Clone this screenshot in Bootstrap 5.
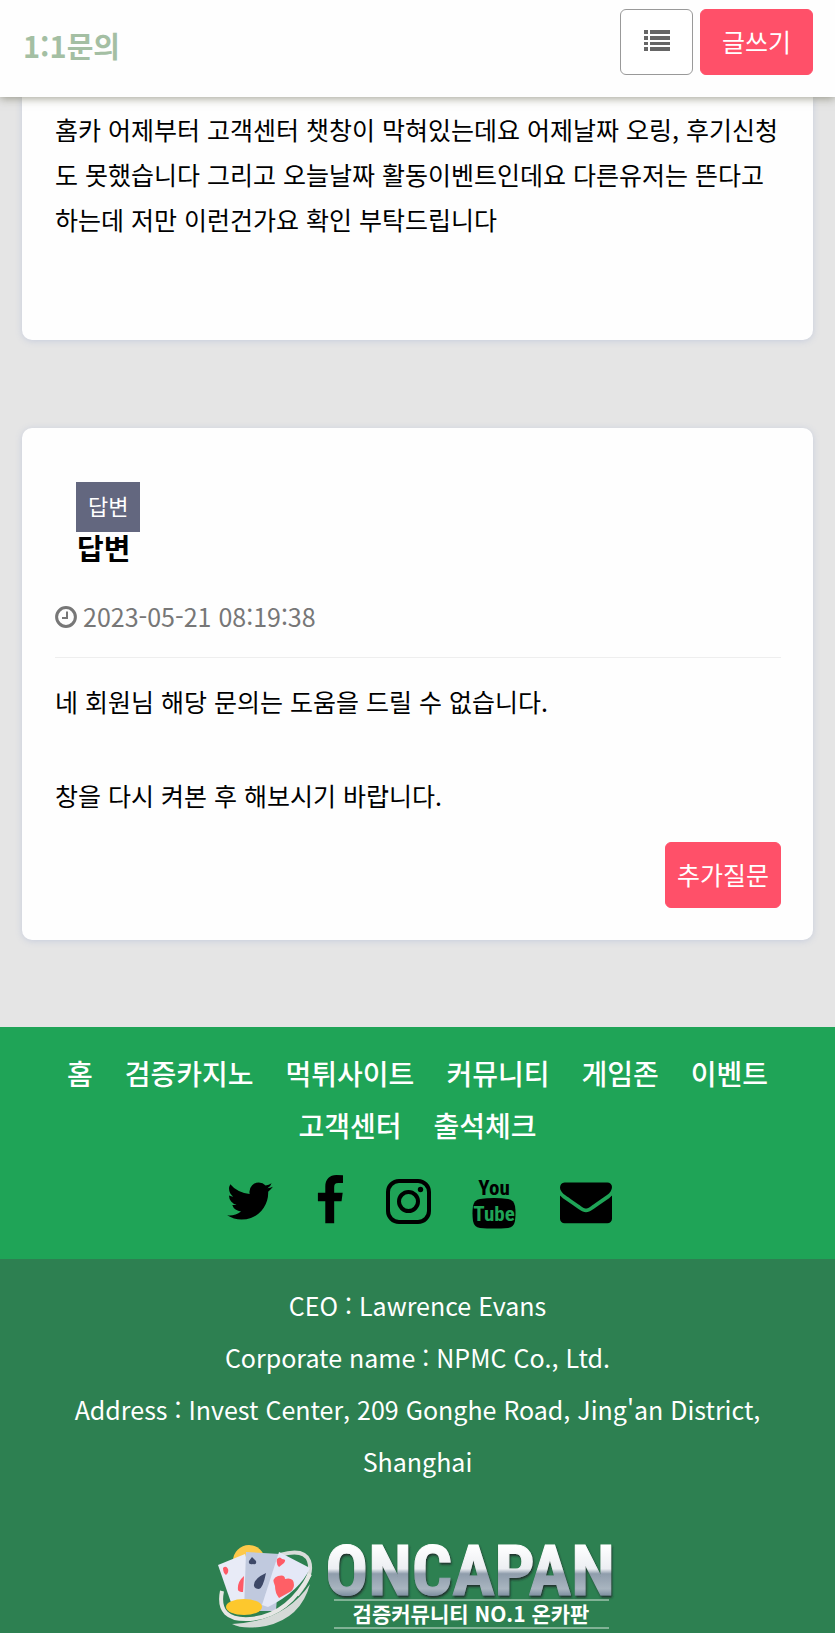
<!DOCTYPE html>
<html lang="ko">
<head>
<meta charset="utf-8">
<meta name="viewport" content="width=device-width, initial-scale=1">
<title>1:1문의</title>
<link href="https://cdn.jsdelivr.net/npm/bootstrap@5.3.0/dist/css/bootstrap.min.css" rel="stylesheet">
<style>
body{background:#e5e5e5;color:#000;font-family:"Noto Sans CJK KR","Noto Sans",sans-serif;font-size:25px;line-height:45px}
.topbar{height:97px;padding:9px 22px 0 23px;background:#fefefe;box-shadow:0 1px 9px rgba(60,60,30,.5);z-index:10}
.topbar h1{font-size:29px;line-height:72px;color:#a4bfa3}
.topbar-actions{gap:7px}
.action{height:66px;border-radius:6px;font-size:25px;line-height:44px;padding:0 11px 2px}
.action-pink,.action-pink:hover{background:#ff5069;color:#fff;border-color:#ff5069}
.action-write{min-width:113px}
.action-list{width:73px;border:1px solid #999;color:#666;background:#fff}
.panel{margin:0 22px;padding:0 32px 0 33px;background:#fefefe;border-radius:10px;box-shadow:0 1px 7px #c6ccdc}
.panel-first{height:243px;padding-top:10px;border-radius:0 0 10px 10px;word-break:break-all}
.panel-reply{margin-top:88px;margin-bottom:87px;padding-top:54px;padding-bottom:32px}
.reply-head{padding-left:21px}
.reply-tag{height:50px;padding:0 12px;background:#63677f;color:#fff;font-size:22px;line-height:46px}
.reply-head h2{font-size:29px;line-height:30px;padding-left:1px}
.reply-date{color:#777;column-gap:6px;margin-top:32px;padding-bottom:18px;border-bottom:1px solid #eee}
.reply-text{line-height:47px;padding-top:20px}
.reply-actions{margin-top:23px}
.foot-nav{background:#1fa457;padding:20px 22px 30px}
.foot-nav ul{column-gap:32px;font-size:28px;font-weight:500;line-height:52px}
.foot-nav a{color:#fff;text-decoration:none}
.foot-nav .social{column-gap:28px;margin-top:22px}
.foot-nav .social a{color:#000}
.social-mail{padding-left:12px}
.foot-info{background:#2d8051;color:#fff;padding:20px 60px 0;line-height:52px}
.brand-logo{margin-top:52px;overflow:visible}
.logo-word{font-family:"Liberation Sans Narrow","Roboto Condensed","Liberation Sans",sans-serif;font-weight:700;font-size:71px}
.logo-sub{font-family:"Noto Sans CJK KR",sans-serif;font-weight:700;font-size:21px}
.tube{font-family:"Liberation Sans Narrow","Roboto Condensed","Liberation Sans",sans-serif;font-weight:700;font-size:21px}
</style>
</head>
<body>
<header class="topbar d-flex justify-content-between align-items-start position-sticky top-0">
  <h1 class="fw-bold m-0">1:1문의</h1>
  <div class="topbar-actions d-flex">
    <button type="button" class="btn action action-list d-flex align-items-center justify-content-center" aria-label="목록">
      <svg width="28" height="24" viewBox="0 0 28 24" fill="currentColor" aria-hidden="true"><path d="M1 1h4v4H1zM7 1h20v4H7zM1 7h4v4H1zM7 7h20v4H7zM1 13h4v3H1zM7 13h20v3H7zM1 18h4v4H1zM7 18h20v4H7z"/></svg>
    </button>
    <button type="button" class="btn action action-pink action-write">글쓰기</button>
  </div>
</header>
<main>
  <article class="panel panel-first">
    <p class="m-0">홈카 어제부터 고객센터 챗창이 막혀있는데요 어제날짜 오링, 후기신청도 못했습니다 그리고 오늘날짜 활동이벤트인데요 다른유저는 뜬다고 하는데 저만 이런건가요 확인 부탁드립니다</p>
  </article>
  <article class="panel panel-reply">
    <div class="reply-head d-flex flex-column align-items-start">
      <span class="reply-tag">답변</span>
      <h2 class="fw-bold m-0">답변</h2>
    </div>
    <div class="reply-date d-flex align-items-center">
      <svg width="22" height="22" viewBox="0 0 22 22" fill="none" stroke="currentColor" aria-hidden="true"><circle cx="11" cy="11" r="9.4" stroke-width="3"/><path d="M12 5.500v6.500H7" stroke-width="2"/></svg>
      <time datetime="2023-05-21T08:19:38">2023-05-21 08:19:38</time>
    </div>
    <div class="reply-text">네 회원님 해당 문의는 도움을 드릴 수 없습니다.<br><br>창을 다시 켜본 후 해보시기 바랍니다.</div>
    <div class="reply-actions text-end"><button type="button" class="btn action action-pink">추가질문</button></div>
  </article>
</main>
<footer>
  <nav class="foot-nav" aria-label="하단 메뉴">
    <ul class="list-unstyled d-flex flex-wrap justify-content-center m-0">
      <li><a href="#">홈</a></li><li><a href="#">검증카지노</a></li><li><a href="#">먹튀사이트</a></li><li><a href="#">커뮤니티</a></li><li><a href="#">게임존</a></li><li><a href="#">이벤트</a></li><li><a href="#">고객센터</a></li><li><a href="#">출석체크</a></li>
    </ul>
    <div class="social d-flex justify-content-center align-items-center">
      <a href="#" class="d-flex" aria-label="Twitter"><svg width="52" height="52" viewBox="0 0 1792 1792" fill="currentColor"><path d="M1684 408q-67 98-162 167 1 14 1 42 0 130-38 259.500t-115.500 248.500-184.500 210.500-258 146-323 54.500q-271 0-496-145 35 4 78 4 225 0 401-138-105-2-188-64.500t-114-159.500q33 5 61 5 43 0 85-11-112-23-185.500-111.500t-73.500-205.500v-4q68 38 146 41-66-44-105-115t-39-154q0-88 44-163 121 149 294.500 238.500t371.500 99.500q-8-38-8-74 0-134 94.500-228.500t228.500-94.500q140 0 236 102 109-21 205-78-37 115-142 178 93-10 186-50z"/></svg></a>
      <a href="#" class="d-flex" aria-label="Facebook"><svg width="52" height="52" viewBox="0 0 1792 1792" fill="currentColor"><path d="M1343 12v264h-157q-86 0-116 36t-30 108v189h293l-39 296h-254v759h-306v-759h-255v-296h255v-218q0-186 104-288.500t277-102.500q147 0 228 12z"/></svg></a>
      <a href="#" class="d-flex" aria-label="Instagram"><svg width="52" height="52" viewBox="0 0 52 52" fill="none" stroke="currentColor" stroke-width="4"><rect x="4" y="6" width="41" height="41" rx="11"/><circle cx="24.500" cy="26.500" r="9.500"/><circle cx="36.500" cy="14.500" r="2.700" fill="currentColor" stroke="none"/></svg></a>
      <a href="#" class="d-flex ps-1" aria-label="YouTube"><svg width="52" height="56" viewBox="0 0 52 56" fill="currentColor"><text class="tube" x="26" y="22" text-anchor="middle">You</text><path d="M12 26Q26 24 40 26Q46 27 47 33Q48 40 47 48Q46 54 40 55Q26 56 12 55Q6 54 5 48Q4 40 5 33Q6 27 12 26Z"/><text class="tube" x="26" y="48" text-anchor="middle" fill="#1fa457">Tube</text></svg></a>
      <a href="#" class="social-mail d-flex" aria-label="E-mail"><svg width="52" height="52" viewBox="0 0 1792 1792" fill="currentColor"><path d="M1792 710v794q0 66-47 113t-113 47h-1472q-66 0-113-47t-47-113v-794q44 49 101 87 362 246 497 345 57 42 92.500 65.500t94.500 48 110 24.500h2q51 0 110-24.500t94.500-48 92.500-65.500q170-123 498-345 57-39 100-87zm0-294q0 79-49 151t-122 123q-376 261-468 325-10 7-42.500 31t-54 38.500-52 32.500-57.500 27-50 9h-2q-23 0-50-9t-57.500-27-52-32.500-54-38.500-42.500-31q-91-64-262-182.500t-205-142.500q-62-42-117-115.500t-55-136.500q0-78 41.500-130t118.500-52h1472q65 0 112.500 47t47.500 113z"/></svg></a>
    </div>
  </nav>
  <div class="foot-info text-center">
    <p class="m-0">CEO : Lawrence Evans</p>
    <p class="m-0">Corporate name : NPMC Co., Ltd.</p>
    <p class="m-0">Address : Invest Center, 209 Gonghe Road, Jing'an District, Shanghai</p>
    <svg class="brand-logo d-block mx-auto" width="400" height="94" viewBox="0 0 400 94" role="img" aria-label="ONCAPAN">
      <defs>
        <linearGradient id="steel" x1="0" y1="0" x2="0" y2="1"><stop offset=".2" stop-color="#fff"/><stop offset=".48" stop-color="#eceef2"/><stop offset=".54" stop-color="#8f9dac"/><stop offset=".72" stop-color="#a9b5c0"/><stop offset=".82" stop-color="#75879a"/></linearGradient>
        <filter id="drop" x="-5%" y="-10%" width="110%" height="125%"><feDropShadow dx="1" dy="2" stdDeviation="1" flood-color="#1d2c2c" flood-opacity=".9"/></filter>
      </defs>
      <circle cx="31" cy="22" r="16" fill="#fdc94a"/>
      <path d="M62 16Q86 9 91 22Q96 36 79 56" fill="none" stroke="#d9dcda" stroke-width="4"/>
      <path d="M0 26 27 15 44 70 17 75Z" fill="#e8ebf7"/>
      <path d="M28 13 62 15 58 72 26 72Z" fill="#c0c9de"/>
      <path d="M61 13 92 29Q82 52 50 68L44 66Z" fill="#e4e8f7"/>
      <path d="M5 29q3-3 5 1 1 4-2 6-3-2-3-7zM59 20q3-3 5 0 5 0 2 4l-5 4q-3-3-2-8zM26 37q-7 6-6 14 1 2 5 2z" fill="#ff5a66"/>
      <path d="M57 47q-4-8 3-10 7-2 7 3 9-2 9 6 0 5-6 8l-9 5q-4-5-4-12z" fill="#ff5f66"/>
      <path d="M34 18l4 4q1 4-3 3-5 1-4-3zM48 34q-13 6-12 13 1 3 5 3 4-1 7-16z" fill="#3d4867"/>
      <ellipse cx="26" cy="68" rx="18" ry="8" fill="#fdc82d"/>
      <path d="M4 52Q-2 82 32 80Q70 77 92 35" fill="none" stroke="#e7e7e5" stroke-width="4"/>
      <path d="M92 45Q66 83 14 85Q25 91 48 87Q83 79 92 45Z" fill="#d5dad7"/>
      <text class="logo-word" x="252" y="56" text-anchor="middle" fill="url(#steel)" stroke="url(#steel)" filter="url(#drop)">ONCAPAN</text>
      <path d="M116 61H391M116 89H391" stroke="#d6e5dc" stroke-width="1"/>
      <text class="logo-sub" x="253" y="83" text-anchor="middle" fill="#fff">검증커뮤니티 NO.1 온카판</text>
    </svg>
  </div>
</footer>
<script src="https://cdn.jsdelivr.net/npm/bootstrap@5.3.0/dist/js/bootstrap.bundle.min.js"></script>
</body>
</html>
